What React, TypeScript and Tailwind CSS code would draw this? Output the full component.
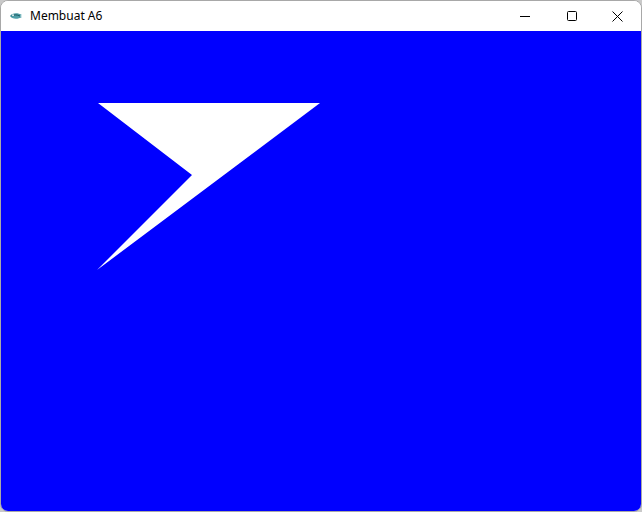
export default function App() {
  return (
    <div className="h-[512px] w-[642px] bg-[#c9c9c9]">
      <div className="flex h-full w-full flex-col overflow-hidden rounded-lg border border-[#a8a8a8] bg-white">
        <div className="flex h-[30px] shrink-0 items-center bg-white" style={{ fontFamily: '"Noto Sans", "Open Sans", sans-serif' }}>
          <svg className="ml-[8px] mr-[7px]" width="14" height="10" viewBox="0 0 14 10">
            <path d="M1 5 C3 1.5 9 1.5 13 4 L11 5 L13 6 C9 8.5 3 8.5 1 5 Z" fill="#4f9fa8" />
            <path d="M2.5 5 C5 3.5 8 3.5 11 5" stroke="#1d5a63" strokeWidth="1" fill="none" />
            <circle cx="4" cy="4.2" r="0.9" fill="#ffffff" />
          </svg>
          <span className="text-[12px] text-black">Membuat A6</span>
          <div className="ml-auto flex h-full items-center">
            <div className="flex h-full w-[46px] items-center justify-center">
              <svg width="10" height="10" viewBox="0 0 10 10">
                <path d="M0 5.5 H10" stroke="#000" strokeWidth="1" />
              </svg>
            </div>
            <div className="flex h-full w-[46px] items-center justify-center">
              <svg className="ml-[2px]" width="10" height="10" viewBox="0 0 10 10">
                <rect x="0.5" y="0.5" width="9" height="9" rx="1" stroke="#000" strokeWidth="1" fill="none" />
              </svg>
            </div>
            <div className="mr-[1px] flex h-full w-[46px] items-center justify-center">
              <svg width="11" height="11" viewBox="0 0 11 11">
                <path d="M0.5 0.5 L10.5 10.5 M10.5 0.5 L0.5 10.5" stroke="#000" strokeWidth="1" />
              </svg>
            </div>
          </div>
        </div>
        <div className="relative flex-1 bg-[#0000ff]">
          <svg className="absolute left-0 top-0" width="640" height="480" viewBox="0 0 640 480">
            <polygon points="97,72 319,72 96,239 191,144" fill="#ffffff" />
          </svg>
        </div>
      </div>
    </div>
  );
}
